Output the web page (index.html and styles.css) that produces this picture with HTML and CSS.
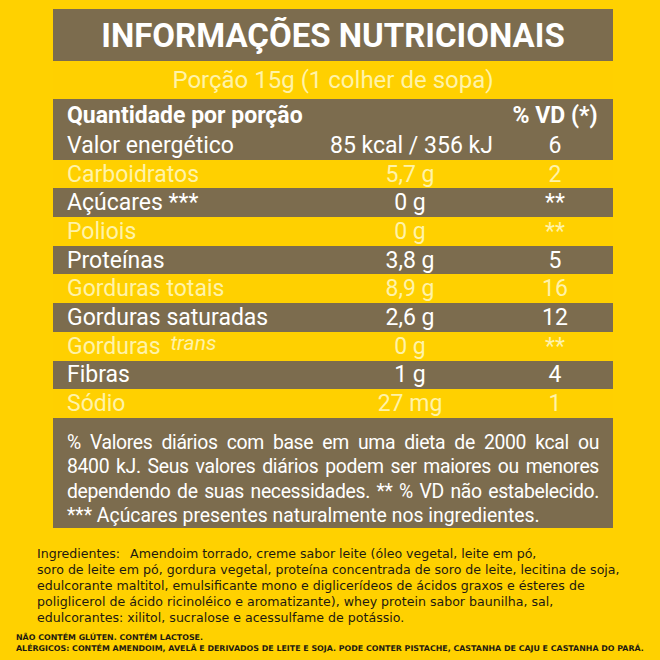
FILE: index.html
```html
<!DOCTYPE html>
<html lang="pt-BR">
<head>
<meta charset="utf-8">
<title>Informações Nutricionais</title>
<link rel="stylesheet" href="styles.css">
</head>
<body>
<div class="panel">
  <div class="title">INFORMAÇÕES NUTRICIONAIS</div>
  <div class="portion">Porção 15g (1 colher de sopa)</div>
  <div class="row head dark">
    <span class="name">Quantidade por porção</span>
    <span class="qty"></span>
    <span class="vd">% VD (*)</span>
  </div>
  <div class="row dark">
    <span class="name">Valor energético</span>
    <span class="qty">85 kcal / 356 kJ</span>
    <span class="vd">6</span>
  </div>
  <div class="row light">
    <span class="name">Carboidratos</span>
    <span class="qty">5,7 g</span>
    <span class="vd">2</span>
  </div>
  <div class="row dark">
    <span class="name">Açúcares ***</span>
    <span class="qty">0 g</span>
    <span class="vd">**</span>
  </div>
  <div class="row light">
    <span class="name">Poliois</span>
    <span class="qty">0 g</span>
    <span class="vd">**</span>
  </div>
  <div class="row dark">
    <span class="name">Proteínas</span>
    <span class="qty">3,8 g</span>
    <span class="vd">5</span>
  </div>
  <div class="row light">
    <span class="name">Gorduras totais</span>
    <span class="qty">8,9 g</span>
    <span class="vd">16</span>
  </div>
  <div class="row dark">
    <span class="name">Gorduras saturadas</span>
    <span class="qty">2,6 g</span>
    <span class="vd">12</span>
  </div>
  <div class="row light">
    <span class="name">Gorduras <em class="trans">trans</em></span>
    <span class="qty">0 g</span>
    <span class="vd">**</span>
  </div>
  <div class="row dark">
    <span class="name">Fibras</span>
    <span class="qty">1 g</span>
    <span class="vd">4</span>
  </div>
  <div class="row light">
    <span class="name">Sódio</span>
    <span class="qty">27 mg</span>
    <span class="vd">1</span>
  </div>
  <div class="note">
    <span class="line">% Valores diários com base em uma dieta de 2000 kcal ou</span>
    <span class="line">8400 kJ. Seus valores diários podem ser maiores ou menores</span>
    <span class="line">dependendo de suas necessidades. ** % VD não estabelecido.</span>
    <span class="line last">*** Açúcares presentes naturalmente nos ingredientes.</span>
  </div>
</div>
<div class="ingredients"><span class="label">Ingredientes:</span> Amendoim torrado, creme sabor leite (óleo vegetal, leite em pó,<br>soro de leite em pó, gordura vegetal, proteína concentrada de soro de leite, lecitina de soja,<br>edulcorante maltitol, emulsificante mono e diglicerídeos de ácidos graxos e ésteres de<br>poliglicerol de ácido ricinoléico e aromatizante), whey protein sabor baunilha, sal,<br>edulcorantes: xilitol, sucralose e acessulfame de potássio.</div>
<div class="allergens">NÃO CONTÉM GLÚTEN. CONTÉM LACTOSE.<br>ALÉRGICOS: CONTÉM AMENDOIM, AVELÃ E DERIVADOS DE LEITE E SOJA. PODE CONTER PISTACHE, CASTANHA DE CAJU E CASTANHA DO PARÁ.</div>
</body>
</html>
```
FILE: styles.css
```css
html, body {
  margin: 0;
  padding: 0;
}
body {
  width: 660px;
  height: 660px;
  background: #FFD100;
  overflow: hidden;
  font-family: Roboto, "Liberation Sans", sans-serif;
}
.panel {
  width: 560px;
  margin: 9px 0 0 53px;
}
.title {
  height: 52px;
  line-height: 54px;
  background: #7C6C4E;
  color: #FFFFFF;
  font-weight: 700;
  font-size: 33px;
  text-align: center;
}
.portion {
  height: 38px;
  line-height: 38px;
  background: #FFD000;
  color: #FFF3A8;
  font-size: 24px;
  text-align: center;
}
.row {
  display: grid;
  grid-template-columns: 1fr 160px 88px;
  column-gap: 21px;
  align-items: center;
  height: 28.7px;
  padding: 0 14px;
  font-size: 23px;
}
.row.head {
  height: 32px;
  font-weight: 700;
}
.dark {
  background: #7C6C4E;
  color: #FFFFFF;
}
.light {
  background: #FFD000;
  color: #FFF3A8;
}
.name {
  white-space: nowrap;
}
.qty, .vd {
  text-align: center;
  white-space: nowrap;
}
.trans {
  font-size: 21px;
  position: relative;
  top: -4px;
  margin-left: 4px;
}
.note {
  background: #7C6C4E;
  color: #FFFFFF;
  font-size: 19.4px;
  line-height: 24.4px;
  padding: 13px 14px 0;
  height: 97px;
}
.line {
  display: block;
  white-space: nowrap;
  letter-spacing: -0.35px;
  text-align: justify;
  text-align-last: justify;
}
.line.last {
  letter-spacing: 0;
  text-align: left;
  text-align-last: left;
}
.ingredients {
  margin: 18px 0 0 37px;
  font-family: "DejaVu Sans", Verdana, sans-serif;
  font-size: 12.6px;
  line-height: 16px;
  color: #1E1A10;
  white-space: nowrap;
}
.label {
  margin-right: 6px;
}
.allergens {
  margin: 6px 0 0 16px;
  font-family: "DejaVu Sans", Verdana, sans-serif;
  font-weight: 700;
  font-size: 7.9px;
  line-height: 11px;
  color: #1E1A10;
  white-space: nowrap;
}
```
